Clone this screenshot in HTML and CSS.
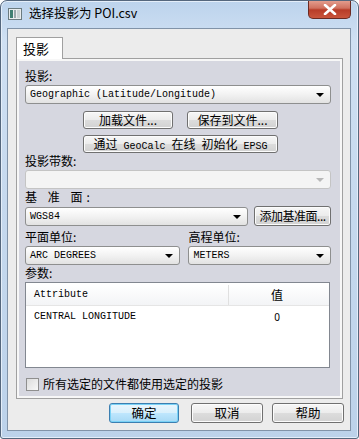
FILE: index.html
```html
<!DOCTYPE html>
<html lang="zh">
<head>
    <meta charset="UTF-8">
    <title>选择投影为 POI.csv</title>
    <link rel="stylesheet" href="styles.css">
</head>
<body>
    <div class="window">
        <!-- 标题栏 -->
        <div class="titlebar">
            <svg class="app-icon" width="14" height="12" viewBox="0 0 14 12">
                <rect x="0.5" y="0.5" width="13" height="11" fill="#e8ecee" stroke="#6b7b80"/>
                <rect x="2" y="2" width="3" height="8" fill="#3f7f72"/>
                <rect x="6" y="2" width="2" height="8" fill="#9aa8ac"/>
                <rect x="9" y="2" width="3" height="8" fill="#c9d2d4"/>
            </svg>
            <span class="title">选择投影为 POI.csv</span>
            <div class="close-btn">
                <svg width="14" height="11" viewBox="0 0 14 11">
                    <path d="M2 1 L12 10 M12 1 L2 10" stroke="#fff" stroke-width="2.6" stroke-linecap="round"/>
                </svg>
            </div>
        </div>

        <!-- 客户区 -->
        <div class="client">
            <div class="tabs">
                <div class="tab">投影</div>
            </div>
            <div class="panel">
                <div class="label first">投影:</div>
                <div class="select">Geographic (Latitude/Longitude)<span class="arrow"></span></div>

                <div class="btn-row">
                    <div class="btn w90">加载文件...</div>
                    <div class="btn w91">保存到文件...</div>
                </div>
                <div class="btn-row second">
                    <div class="btn wide">通过<span class="mono"> GeoCalc </span>在线<span class="mono"> </span>初始化<span class="mono"> EPSG</span></div>
                </div>

                <div class="label">投影带数:</div>
                <div class="select disabled"><span class="arrow"></span></div>

                <div class="label spaced">基 准 面:</div>
                <div class="datum-row">
                    <div class="select datum">WGS84<span class="arrow"></span></div>
                    <div class="btn add-datum">添加基准面...</div>
                </div>

                <div class="units">
                    <div class="unit-col left">
                        <div class="label">平面单位:</div>
                        <div class="select">ARC DEGREES<span class="arrow"></span></div>
                    </div>
                    <div class="unit-col right">
                        <div class="label">高程单位:</div>
                        <div class="select">METERS<span class="arrow"></span></div>
                    </div>
                </div>

                <div class="label">参数:</div>
                <div class="listbox">
                    <div class="list-head">
                        <div class="col-attr">Attribute</div>
                        <div class="col-val">值</div>
                    </div>
                    <div class="list-row">
                        <div class="col-attr">CENTRAL LONGITUDE</div>
                        <div class="col-val">0</div>
                    </div>
                </div>

                <div class="check-row">
                    <span class="checkbox"></span>
                    <span>所有选定的文件都使用选定的投影</span>
                </div>
            </div>

            <div class="footer">
                <div class="btn dlg default">确定</div>
                <div class="btn dlg">取消</div>
                <div class="btn dlg">帮助</div>
            </div>
        </div>
    </div>
</body>
</html>
```

FILE: styles.css
```css
body {
    margin: 0;
    padding: 0;
    font-family: "Noto Sans CJK SC", "Noto Sans", sans-serif;
    font-size: 12px;
    color: #000;
    background: #fff;
}

.window {
    width: 359px;
    height: 439px;
    box-sizing: border-box;
    border: 1px solid #55677d;
    border-radius: 7px 7px 3px 3px;
    background: linear-gradient(to bottom, #bcd3ec 0px, #cfe0f3 40px, #c6d9ee 200px, #bcd2ea 439px);
    box-shadow: inset 0 0 0 1px #e4eef9;
    display: flex;
    flex-direction: column;
    overflow: hidden;
}

.titlebar {
    height: 27px;
    display: flex;
    align-items: flex-start;
    position: relative;
}

.app-icon {
    margin: 7px 0 0 7px;
}

.title {
    margin: 4px 0 0 7px;
    font-size: 12.5px;
    line-height: 16px;
    color: #000;
}

.close-btn {
    position: absolute;
    top: -1px;
    right: 7px;
    width: 43px;
    height: 19px;
    box-sizing: border-box;
    border: 1px solid #6b2a22;
    border-top: none;
    border-radius: 0 0 5px 5px;
    background: linear-gradient(to bottom, #e6a293 0%, #d0715f 45%, #b83c28 55%, #c9553c 100%);
    display: flex;
    align-items: center;
    justify-content: center;
}

.client {
    margin: 0 7px 7px 6px;
    flex: 1;
    border: 1px solid #8193a8;
    background: #ececec;
    padding: 8px 7px 0 8px;
    display: flex;
    flex-direction: column;
}

.tabs {
    display: flex;
    height: 21px;
}

.tab {
    width: 47px;
    height: 22px;
    box-sizing: border-box;
    border: 1px solid #a0a0a0;
    border-bottom: none;
    background: #fff;
    padding-left: 6px;
    font-size: 13px;
    line-height: 21px;
    position: relative;
    z-index: 1;
}

.panel {
    height: 341px;
    box-sizing: border-box;
    border: 1px solid #a0a0a0;
    box-shadow: inset 0 0 0 2px #f7f7f7;
    background: #d6d7e0;
    padding: 0 11px 0 8px;
}

.label {
    line-height: 14px;
    height: 14px;
    margin-top: 1px;
    margin-bottom: 2px;
}

.label.first {
    margin-top: 10px;
}

.label.spaced {
    letter-spacing: 4px;
}

.mono,
.select,
.listbox {
    font-family: "Liberation Mono", "DejaVu Sans Mono", monospace;
}

.select {
    height: 19px;
    box-sizing: border-box;
    border: 1px solid #8e8f8f;
    border-radius: 3px;
    background: linear-gradient(to bottom, #ffffff 0%, #f2f2f2 50%, #e2e2e2 100%);
    font-size: 10px;
    line-height: 17px;
    padding-left: 4px;
    position: relative;
    white-space: nowrap;
}

.select.disabled {
    border-color: #c4c4c4;
    background: #f4f4f4;
}

.arrow {
    position: absolute;
    right: 6px;
    top: 7px;
    width: 0;
    height: 0;
    border-left: 4px solid transparent;
    border-right: 4px solid transparent;
    border-top: 4px solid #000;
}

.select.disabled .arrow {
    border-top-color: #b8b8b8;
}

.btn {
    height: 18px;
    box-sizing: border-box;
    border: 1px solid #707070;
    border-radius: 3px;
    background: linear-gradient(to bottom, #f7f7f7 0%, #ececec 48%, #dcdcdc 52%, #d2d2d2 100%);
    box-shadow: inset 0 0 0 1px #fcfcfc;
    line-height: 16px;
    text-align: center;
    white-space: pre;
}

.btn .mono {
    font-size: 10px;
}

.btn-row {
    display: flex;
    gap: 14px;
    margin: 7px 0 0 58px;
}

.btn-row.second {
    margin-top: 6px;
}

.w90 {
    width: 90px;
}

.w91 {
    width: 91px;
}

.wide {
    width: 195px;
}

.datum-row {
    display: flex;
    align-items: center;
}

.select.datum {
    width: 224px;
}

.add-datum {
    width: 77px;
    height: 20px;
    margin-left: 6px;
    line-height: 18px;
    letter-spacing: -0.5px;
}

.units {
    display: flex;
    margin-top: 3px;
}

.unit-col.left {
    width: 156px;
}

.unit-col.right {
    width: 143px;
    margin-left: 8px;
}

.listbox {
    height: 86px;
    box-sizing: border-box;
    border: 1px solid #828790;
    background: #fff;
    font-size: 10px;
    margin-right: 1px;
}

.list-head {
    display: flex;
    height: 20px;
    line-height: 20px;
    margin-top: 2px;
    background: linear-gradient(to bottom, #ffffff, #f3f4f6);
    border-bottom: 1px solid #e5e5e5;
}

.list-head .col-attr {
    border-right: 1px solid #e0e0e0;
}

.list-head .col-val {
    font-family: "Noto Sans CJK SC", sans-serif;
    font-size: 12px;
}

.col-attr {
    width: 194px;
    padding-left: 8px;
}

.col-val {
    flex: 1;
    text-align: center;
    padding-right: 4px;
}

.list-row {
    display: flex;
    line-height: 16px;
    margin-top: 3px;
}

.list-row .col-attr {
    border-right: 1px solid transparent;
}

.list-row .col-val {
    font-family: "Noto Sans", sans-serif;
}

.check-row {
    display: flex;
    align-items: center;
    margin-top: 9px;
    height: 14px;
    line-height: 14px;
}

.checkbox {
    width: 13px;
    height: 13px;
    box-sizing: border-box;
    border: 1px solid #8f8f8f;
    background: linear-gradient(135deg, #dcdcdc, #f8f8f8);
    margin: 0 4px 0 1px;
}

.footer {
    display: flex;
    justify-content: flex-end;
    gap: 9px;
    margin-top: 4px;
    margin-right: -1px;
}

.btn.dlg {
    width: 72px;
    height: 20px;
    line-height: 18px;
    font-size: 12.5px;
}

.btn.default {
    width: 70px;
    margin-right: 3px;
    border-color: #3c7fb1;
    box-shadow: inset 0 0 0 1px #7ad2f6;
    background: linear-gradient(to bottom, #eaf6fd 0%, #d9f0fc 48%, #bee6fd 52%, #a7d9f5 100%);
}
```
